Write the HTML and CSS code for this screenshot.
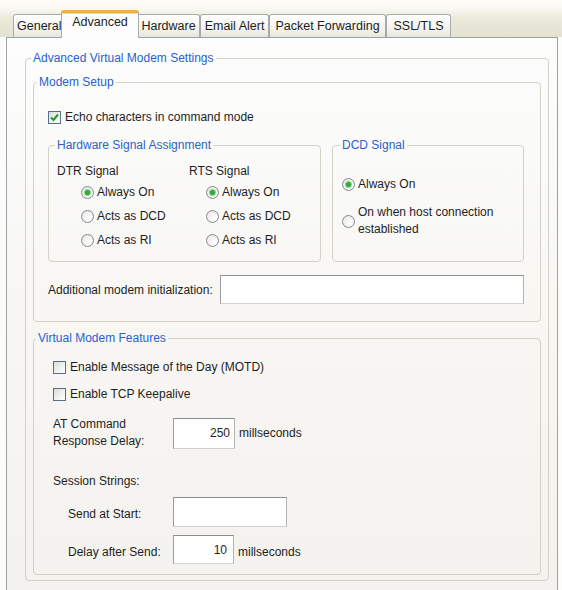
FILE: index.html
```html
<!DOCTYPE html>
<html lang="en">
<head>
  <meta charset="UTF-8">
  <meta name="viewport" content="width=device-width, initial-scale=1.0">
  <title>Advanced Virtual Modem Settings</title>
  <link rel="stylesheet" href="styles.css">
</head>
<body>
  <!-- Tab strip -->
  <div class="tabs">
    <div class="tab tab-general">General</div>
    <div class="tab active">Advanced</div>
    <div class="tab tab-hardware">Hardware</div>
    <div class="tab tab-email">Email Alert</div>
    <div class="tab tab-packet">Packet Forwarding</div>
    <div class="tab tab-ssl">SSL/TLS</div>
  </div>

  <div class="panel">
    <fieldset class="group outer">
      <legend>Advanced Virtual Modem Settings</legend>

      <!-- Modem Setup -->
      <fieldset class="group setup">
        <legend>Modem Setup</legend>

        <div class="check-row">
          <span class="box checked">
            <svg width="11" height="11" viewBox="0 0 11 11"><path d="M2 5.5 L4.5 8 L9 2.5" fill="none" stroke="#1f9a2a" stroke-width="2"/></svg>
          </span>
          Echo characters in command mode
        </div>

        <div class="signals">
          <fieldset class="group hw">
            <legend>Hardware Signal Assignment</legend>
            <div class="cols">
              <div class="col dtr">
                <div class="col-title">DTR Signal</div>
                <div class="options">
                  <div class="radio-row"><span class="radio on"></span>Always On</div>
                  <div class="radio-row"><span class="radio"></span>Acts as DCD</div>
                  <div class="radio-row"><span class="radio"></span>Acts as RI</div>
                </div>
              </div>
              <div class="col rts">
                <div class="col-title">RTS Signal</div>
                <div class="options">
                  <div class="radio-row"><span class="radio on"></span>Always On</div>
                  <div class="radio-row"><span class="radio"></span>Acts as DCD</div>
                  <div class="radio-row"><span class="radio"></span>Acts as RI</div>
                </div>
              </div>
            </div>
          </fieldset>

          <fieldset class="group dcd">
            <legend>DCD Signal</legend>
            <div class="dcd-row"><span class="radio on"></span>Always On</div>
            <div class="dcd-row two-line"><span class="radio"></span><span>On when host connection<br>established</span></div>
          </fieldset>
        </div>

        <div class="init-row">
          <span class="init-label">Additional modem initialization:</span>
          <input type="text" class="field init-field">
        </div>
      </fieldset>

      <!-- Virtual Modem Features -->
      <fieldset class="group features">
        <legend>Virtual Modem Features</legend>

        <div class="check-row"><span class="box"></span>Enable Message of the Day (MOTD)</div>
        <div class="check-row second"><span class="box"></span>Enable TCP Keepalive</div>

        <div class="field-row at-row">
          <span class="at-label">AT Command<br>Response Delay:</span>
          <input type="text" class="field num" value="250">
          <span class="unit">millseconds</span>
        </div>

        <div class="session-title">Session Strings:</div>

        <div class="field-row session-row">
          <span class="field-label">Send at Start:</span>
          <input type="text" class="field start-field">
        </div>

        <div class="field-row session-row">
          <span class="field-label">Delay after Send:</span>
          <input type="text" class="field num delay-field" value="10">
          <span class="unit field-label">millseconds</span>
        </div>
      </fieldset>
    </fieldset>
  </div>
</body>
</html>
```

FILE: styles.css
```css
html {
    overflow: hidden;
}
body {
    margin: 0;
    font-family: "Liberation Sans", Arial, sans-serif;
    font-size: 12px;
    color: #1e1e1e;
    background: #fcfcfa;
}

/* tabs */
.tabs {
    display: flex;
    align-items: flex-end;
    height: 37px;
    padding-left: 13px;
    font-size: 12.5px;
    background: linear-gradient(#fdfdfa 0, #faf9f2 8px, #ebeadb 18px, #e3e2d1 37px);
}
.tab {
    box-sizing: border-box;
    height: 23px;
    line-height: 22px;
    border: 1px solid #a6abab;
    border-bottom: none;
    border-radius: 3px 3px 0 0;
    background: linear-gradient(#ffffff, #f4f3ee 60%, #e8e7de);
    text-align: center;
    white-space: nowrap;
    overflow: hidden;
}
.tab-general {
    width: 50px;
    text-align: left;
    padding-left: 3px;
}
.tab-hardware { width: 63px; }
.tab-email { width: 69px; }
.tab-packet { width: 117px; }
.tab-ssl { width: 65px; }
.tab.active {
    position: relative;
    z-index: 1;
    width: 78px;
    height: 28px;
    margin: 0 -2px -1px;
    line-height: 18px;
    border-top: 3px solid #efb043;
    box-shadow: inset 0 1px #ffd877;
    background: #fdfdfd;
}

/* page */
.panel {
    box-sizing: border-box;
    width: 552px;
    height: 556px;
    margin-left: 6px;
    padding: 13px 8px 0 18px;
    border: 1px solid #9aa2a3;
    background: linear-gradient(#fdfdfd, #f8f7f4 45%, #f4f2ee);
}

/* group boxes */
.group {
    margin: 0;
    padding: 0;
    min-width: 0;
    border: 1px solid #d2d1c5;
    border-radius: 4px;
}
.group legend {
    padding: 0 2px;
    line-height: 15px;
    color: #2a62c9;
}
.outer {
    padding: 9px 7px 5px 7px;
}
.outer > legend {
    margin-left: -2px;
}
.setup {
    padding: 20px 16px 17px 14px;
}
.setup > legend {
    margin-left: -11px;
}
.features {
    margin-top: 9px;
    padding: 14px 10px 10px 19px;
}
.features > legend {
    margin-left: -17px;
}

/* checkboxes & radios */
.check-row {
    display: flex;
    align-items: center;
    line-height: 15px;
}
.check-row.second {
    margin-top: 12px;
}
.box {
    box-sizing: border-box;
    display: inline-flex;
    align-items: center;
    justify-content: center;
    width: 13px;
    height: 13px;
    margin-right: 4px;
    border: 1px solid #55708f;
    background: linear-gradient(135deg, #dcdcd5, #f6f6f3 70%, #ffffff);
}
.radio {
    box-sizing: border-box;
    display: inline-flex;
    align-items: center;
    justify-content: center;
    flex-shrink: 0;
    width: 13px;
    height: 13px;
    margin-right: 3px;
    border: 1px solid #7f8c99;
    border-radius: 50%;
    background: radial-gradient(circle at 65% 65%, #ffffff, #e4e3dc);
}
.radio.on::after {
    content: "";
    width: 5px;
    height: 5px;
    border-radius: 50%;
    background: #35a83a;
    box-shadow: 0 0 0 1px #8fd68f;
}

/* signal groups */
.signals {
    display: flex;
    gap: 11px;
    margin-top: 13px;
}
.hw {
    box-sizing: border-box;
    width: 273px;
    padding: 11px 8px 9px 8px;
}
.hw > legend,
.dcd > legend {
    margin-left: -2px;
}
.cols {
    display: flex;
}
.col.dtr {
    width: 132px;
}
.col-title {
    line-height: 15px;
}
.options {
    margin-top: 1px;
}
.dtr .options {
    margin-left: 24px;
}
.rts .options {
    margin-left: 17px;
}
.radio-row {
    display: flex;
    align-items: center;
    height: 24px;
}
.dcd {
    flex: 1;
    padding: 24px 8px 0 9px;
}
.dcd-row {
    display: flex;
    align-items: center;
    line-height: 15px;
}
.dcd-row.two-line {
    margin-top: 12px;
    line-height: 17px;
}

/* text fields */
.field {
    box-sizing: border-box;
    height: 30px;
    padding: 0 4px;
    font: inherit;
    color: #1e1e1e;
    background: #fff;
    border: 1px solid;
    border-color: #8e8e8e #b3b3b3 #d2d2d2 #9c9c9c;
    outline: none;
}
.field.num {
    text-align: right;
}
.init-row {
    display: flex;
    align-items: center;
    margin-top: 13px;
}
.init-label {
    width: 172px;
    white-space: nowrap;
}
.init-field {
    flex: 1;
    height: 29px;
}
.field-row {
    display: flex;
    align-items: center;
}
.at-row {
    margin-top: 14px;
}
.at-label {
    width: 120px;
    line-height: 17px;
}
.at-row .field {
    width: 62px;
    height: 31px;
}
.unit {
    margin-left: 4px;
}
.session-title {
    margin-top: 24px;
    line-height: 15px;
}
.session-row {
    margin-top: 8px;
    padding-left: 15px;
}
.field-label {
    padding-top: 4px;
}
.session-row > .field-label:first-child {
    width: 105px;
}
.start-field {
    width: 114px;
}
.delay-field {
    width: 61px;
    height: 29px;
    padding-right: 6px;
}
```
